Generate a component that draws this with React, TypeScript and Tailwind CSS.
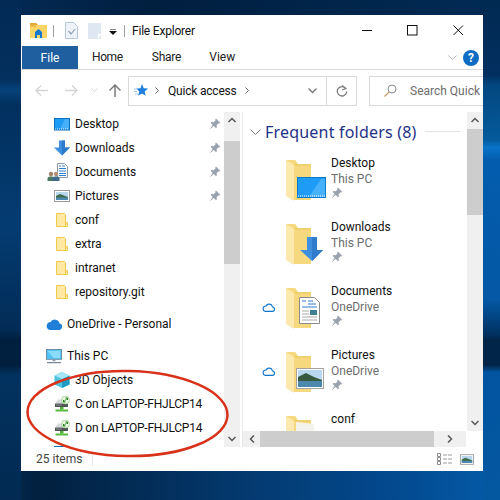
import React from 'react';

const font = "font-['Roboto','Noto_Sans',sans-serif]";

function SmallFolder() {
    return (
        <svg width="16" height="16" viewBox="0 0 16 16" className="shrink-0">
            <path d="M2.500 1.500h8l1 1v12h-9z" fill="#ffe9a3" stroke="#f2c94c" />
            <path d="M11.500 10.500h2v4h-2z" fill="#ffe9a3" stroke="#f2c94c" />
        </svg>
    );
}

function Pin({ className = '' }: { className?: string }) {
    return (
        <svg width="12" height="12" viewBox="0 0 12 12" className={`shrink-0 ${className}`}>
            <path d="M7 0.500l4.500 4.500-1.200.6-.7-.3-2 2 .3 2-1 1-2-2.200L1 11l-.2-.2 3-3.900-2.200-2 1-1 2 .3 2-2-.3-.7z" fill="#9aa3ad" />
        </svg>
    );
}

function DesktopIcon() {
    return (
        <svg width="16" height="13" viewBox="0 0 16 13" className="shrink-0">
            <rect x="0.500" y="0.500" width="15" height="11.500" fill="#1e9bf5" stroke="#0f6fb8" />
            <path d="M6 11l5-10h4v10z" fill="#46b1fa" />
            <path d="M1 11h14" stroke="#ffffff" strokeDasharray="1 1" strokeWidth="0.800" />
        </svg>
    );
}

function DownArrow() {
    return (
        <svg width="16" height="16" viewBox="0 0 16 16" className="shrink-0">
            <path d="M5 0.500h6v7h5l-8 8-8-8h5z" fill="#3f8fe0" />
            <path d="M8 .5h3v7h5l-8 8z" fill="#2f7bcb" />
        </svg>
    );
}

function DocsIcon() {
    return (
        <svg width="22" height="18" viewBox="0 0 22 18" className="shrink-0">
            <path d="M10.500 0.500h7l3 3v11h-10z" fill="#fff" stroke="#8b98a5" />
            <path d="M12 3h2M15 3h3M12 5.500h7M12 8h7M12 10.500h7M12 12.500h7" stroke="#2c7fd0" strokeWidth="1" />
            <circle cx="4" cy="11" r="2.200" fill="#a08468" />
            <path d="M0.500 18v-2.500c0-1.500 1.500-2 3.500-2s3.500.5 3.500 2V18z" fill="#4a7a62" />
            <circle cx="9" cy="11" r="2.200" fill="#b2937a" />
            <path d="M5.500 18v-2.500c0-1.500 1.500-2 3.500-2s3.500.5 3.500 2V18z" fill="#3d6a8a" />
        </svg>
    );
}

function PictureIcon({ w = 16, h = 12 }: { w?: number; h?: number }) {
    return (
        <svg width={w} height={h} viewBox="0 0 16 12" className="shrink-0">
            <rect x="0.500" y="0.500" width="15" height="11" fill="#fff" stroke="#9a9a9a" />
            <rect x="2" y="2" width="12" height="8" fill="#b9d8ee" />
            <path d="M2 6l4-2 4 1.500 4 1.500v1H2z" fill="#3f6b4a" />
            <rect x="2" y="7.500" width="12" height="2.500" fill="#4c8ab0" />
        </svg>
    );
}

function Cloud({ color = '#0f72d0', filled = false, w = 16, h = 11 }: { color?: string; filled?: boolean; w?: number; h?: number }) {
    return (
        <svg width={w} height={h} viewBox="0 0 16 11" className="shrink-0">
            <path
                d="M4 10.300h8.500a2.700 2.700 0 0 0 .4-5.400 4.200 4.200 0 0 0-7.900-1.300 3.400 3.400 0 0 0-1 6.700z"
                fill={filled ? color : 'none'}
                stroke={color}
                strokeWidth="1.400"
            />
        </svg>
    );
}

function PcIcon() {
    return (
        <svg width="16" height="15" viewBox="0 0 17 16" className="shrink-0">
            <rect x="0.500" y="0.500" width="16" height="10.500" fill="#53c3f5" stroke="#6a8aa0" />
            <path d="M2 2h13v7.500H8z" fill="#8bdcfb" />
            <path d="M7 11h3v2H7z" fill="#8e9aa5" />
            <path d="M1 14.500h15" stroke="#7d8b98" strokeWidth="1.400" />
        </svg>
    );
}

function CubeIcon() {
    return (
        <svg width="16" height="16" viewBox="0 0 16 16" className="shrink-0">
            <path d="M8 0l7.500 3.500v9L8 16 .5 12.500v-9z" fill="#4cc4e0" />
            <path d="M8 7l7.500-3.500v9L8 16z" fill="#1f9bc4" />
            <path d="M8 0l7.500 3.500L8 7 .5 3.500z" fill="#a5e6f4" />
        </svg>
    );
}

function NetDrive() {
    return (
        <svg width="16" height="16" viewBox="0 0 16 16" className="shrink-0">
            <path d="M1 7.500L4 3.500h6v4z" fill="#d8dadb" />
            <rect x="1" y="7.500" width="13" height="3.500" rx="0.500" fill="#4f5356" />
            <rect x="2" y="8.500" width="6" height="1" fill="#8b8f92" />
            <rect x="6" y="11" width="3.500" height="2.500" fill="#4fae35" />
            <rect x="1.500" y="13.500" width="12.500" height="2" fill="#58bb3c" />
            <circle cx="11.500" cy="4" r="4" fill="#eaf7e4" stroke="#86c66c" strokeWidth="0.600" />
            <path d="M9.500 6l4-4M11.500 2h2v2M11.500 6h-2V4" stroke="#237f1e" strokeWidth="1" fill="none" />
        </svg>
    );
}

function BigFolder({ children }: { children?: React.ReactNode }) {
    return (
        <svg width="42" height="42" viewBox="0 0 42 42" className="shrink-0">
            <path d="M0 0h9l3 4h13v36H6z" fill="#f6d97e" />
            <path d="M0 0l8 5v36L0 36z" fill="#fce9ad" />
            <path d="M8 5h17" stroke="#edc860" />
            {children}
        </svg>
    );
}

function SideRow({ icon, label, pin, indent = 'pl-[33px]', gap = 'gap-[5px]', tight }: { icon: React.ReactNode; label: string; pin?: boolean; indent?: string; gap?: string; tight?: boolean }) {
    return (
        <div className={`flex h-6 shrink-0 items-center ${indent} pr-[3px]`}>
            <div className={`flex min-w-0 flex-1 items-center ${gap}`}>
                {icon}
                <span className={`whitespace-nowrap text-[12px] text-[#111] ${tight ? 'tracking-[-0.25px]' : ''}`}>{label}</span>
            </div>
            {pin && <Pin />}
        </div>
    );
}

function Tile({ name, loc, cloud, pin = true, children }: { name: string; loc?: string; cloud?: boolean; pin?: boolean; children?: React.ReactNode }) {
    return (
        <div className="flex h-16 shrink-0 items-start">
            <div className="flex h-[58px] w-[43px] shrink-0 items-center pl-[19px]">{cloud && <Cloud w={13} h={9} />}</div>
            <div className="pt-[10px]"><BigFolder>{children}</BigFolder></div>
            <div className="flex flex-col pl-[3px] pt-[5px] text-[12px] leading-4">
                <span className="text-[#111]">{name}</span>
                {loc && <span className="text-[#6d6d6d]">{loc}</span>}
                {pin && <Pin />}
            </div>
        </div>
    );
}

function TitleBar() {
    return (
        <div className="flex h-[31px] shrink-0 items-center pl-[9px]">
            <svg width="17" height="15" viewBox="0 0 17 15" className="shrink-0">
                <path d="M0 0h6l2 2h9v13H0z" fill="#fbd568" />
                <path d="M0 0h6l2 2h-8z" fill="#e2a93a" />
                <path d="M0 2h5l2 2H0z" fill="#e9b949" />
                <path d="M5 15v-6l3.500-3 3.500 3v6h-2v-3H7v3z" fill="#1778d0" />
            </svg>
            <div className="ml-[6px] h-3 w-px bg-[#a0a0a0]" />
            <svg width="13" height="17" viewBox="0 0 13 17" className="ml-[11px] shrink-0">
                <path d="M.5.500h8l4 4v12H.5z" fill="#eef3f9" stroke="#b4c7dc" />
                <path d="M3.500 9l2.500 3 4-5" stroke="#8aa0b5" fill="none" strokeWidth="1.200" />
            </svg>
            <svg width="13" height="16" viewBox="0 0 13 16" className="ml-[10px] shrink-0">
                <path d="M0 0h13v16H0z" fill="#dfe7f2" />
                <path d="M10 11h3l-3 5z" fill="#fff" />
            </svg>
            <svg width="8" height="6" viewBox="0 0 8 6" className="ml-[8px] mt-[2px] shrink-0">
                <path d="M1 0h6" stroke="#111" />
                <path d="M0 2h8L4 6z" fill="#111" />
            </svg>
            <div className="ml-[7px] h-3 w-px bg-[#a0a0a0]" />
            <span className="ml-[7px] whitespace-nowrap text-[12px] tracking-[-0.2px] text-[#111]">File Explorer</span>
            <div className="ml-auto flex items-center">
                <svg width="11" height="11" viewBox="0 0 11 11" className="mr-[34px]"><path d="M0 5.500h10" stroke="#111" /></svg>
                <svg width="11" height="11" viewBox="0 0 11 11" className="mr-[35px]"><rect x="0.500" y="0.500" width="9.500" height="9.500" fill="none" stroke="#111" /></svg>
                <svg width="11" height="11" viewBox="0 0 11 11" className="mr-[19px]"><path d="M.5.500l9.500 9.500M10 .500L.5 10" stroke="#111" /></svg>
            </div>
        </div>
    );
}

function Ribbon() {
    return (
        <div className="flex h-6 shrink-0 border-b border-[#dadbdc] pl-px text-[12px]">
            <div className="flex h-[23px] w-14 items-center justify-center bg-[#1f5f9f] text-white">File</div>
            <span className="ml-[14px] leading-[23px] tracking-[-0.4px] text-[#222]">Home</span>
            <span className="ml-[29px] leading-[23px] tracking-[-0.2px] text-[#222]">Share</span>
            <span className="ml-[28px] leading-[23px] text-[#222]">View</span>
            <div className="ml-auto flex items-center gap-[6px] pr-[4px]">
                <svg width="9" height="6" viewBox="0 0 9 6"><path d="M.5.500l4 4 4-4" stroke="#b5b5b5" fill="none" /></svg>
                <div className="flex h-4 w-4 items-center justify-center rounded-full bg-[#0f6cc4] text-[12px] font-bold leading-none text-white">?</div>
            </div>
        </div>
    );
}

function AddressBar() {
    return (
        <div className="flex h-[42px] shrink-0 items-center pb-[6px] pt-[5px] text-[12px]">
            <svg width="13" height="11" viewBox="0 0 13 11" className="ml-[14px]"><path d="M6 .500L1 5.500l5 5M1 5.500h12" stroke="#d4d4d4" fill="none" strokeWidth="1.400" /></svg>
            <svg width="13" height="11" viewBox="0 0 13 11" className="ml-[17px]"><path d="M7 .500l5 5-5 5M12 5.500H0" stroke="#d4d4d4" fill="none" strokeWidth="1.400" /></svg>
            <svg width="7" height="5" viewBox="0 0 7 5" className="ml-[13px]"><path d="M.5.500l3 3 3-3" stroke="#d4d4d4" fill="none" /></svg>
            <svg width="12" height="13" viewBox="0 0 12 13" className="ml-[11px]"><path d="M.5 6.500L6 1l5.500 5.500M6 1v12" stroke="#7b7b7b" fill="none" strokeWidth="1.500" /></svg>
            <div className="ml-[7px] flex h-[30px] w-[229px] items-center border border-[#d9d9d9]">
                <svg width="14" height="13" viewBox="0 0 14 13" className="ml-[5px] shrink-0">
                    <path d="M8 0l1.700 4.200L14 4.600l-3.300 2.800 1 4.400L8 9.400l-3.800 2.400 1-4.400L2.500 4.600l4-.4z" fill="#1f7fdc" />
                    <path d="M0 5h3M0 7.500h3M1 10h3" stroke="#9cc6ee" />
                </svg>
                <svg width="4" height="7" viewBox="0 0 4 7" className="ml-[7px] shrink-0"><path d="M.5.500l3 3-3 3" stroke="#666" fill="none" /></svg>
                <span className="ml-[9px] whitespace-nowrap tracking-[-0.2px] text-[#111]">Quick access</span>
                <svg width="4" height="7" viewBox="0 0 4 7" className="ml-[8px] shrink-0"><path d="M.5.500l3 3-3 3" stroke="#666" fill="none" /></svg>
                <svg width="9" height="6" viewBox="0 0 9 6" className="ml-auto mr-[9px] shrink-0"><path d="M.5.500l4 4 4-4" stroke="#777" fill="none" strokeWidth="1.300" /></svg>
                <div className="flex h-full w-[30px] shrink-0 items-center justify-center border-l border-[#d9d9d9]">
                    <svg width="12" height="12" viewBox="0 0 12 12"><path d="M9.800 3.500A4.700 4.700 0 1 0 10.700 6.500M6 .500L9.800 3.500 6 5" stroke="#7b7b7b" fill="none" strokeWidth="1.300" /></svg>
                </div>
            </div>
            <div className="ml-[12px] flex h-[30px] flex-1 items-center overflow-hidden border-y border-l border-[#d9d9d9]">
                <svg width="13" height="13" viewBox="0 0 13 13" className="ml-[14px] shrink-0"><circle cx="8" cy="5" r="4" fill="none" stroke="#888" /><path d="M5 8l-4.500 4.500" stroke="#c79a6a" strokeWidth="1.200" /></svg>
                <span className="ml-[13px] whitespace-nowrap text-[#6d6d6d]">Search Quick</span>
            </div>
        </div>
    );
}

function Scrollbar({ top, thumb, rest }: { top: string; thumb: string; rest: string }) {
    return (
        <div className="flex w-4 shrink-0 flex-col bg-[#f0f0f0]">
            <div className={`flex ${top} shrink-0 items-start justify-center pt-[5px]`}>
                <svg width="8" height="6" viewBox="0 0 8 6"><path d="M.5 5l3.500-3.500L7.500 5" stroke="#555" fill="none" strokeWidth="1.500" /></svg>
            </div>
            <div className={`${thumb} shrink-0 bg-[#cdcdcd]`} />
            <div className={`flex ${rest} items-end justify-center pb-[5px]`}>
                <svg width="8" height="6" viewBox="0 0 8 6"><path d="M.5 1l3.500 3.500L7.500 1" stroke="#555" fill="none" strokeWidth="1.500" /></svg>
            </div>
        </div>
    );
}

function NavPane() {
    return (
        <div className="flex h-[335px] w-[219px] shrink-0">
            <div className="flex min-w-0 flex-1 flex-col overflow-hidden">
                <SideRow icon={<DesktopIcon />} label="Desktop" pin />
                <SideRow icon={<DownArrow />} label="Downloads" pin />
                <SideRow icon={<DocsIcon />} label="Documents" pin indent="pl-[26px]" gap="gap-[6px]" />
                <SideRow icon={<PictureIcon />} label="Pictures" pin />
                <SideRow icon={<SmallFolder />} label="conf" />
                <SideRow icon={<SmallFolder />} label="extra" />
                <SideRow icon={<SmallFolder />} label="intranet" />
                <SideRow icon={<SmallFolder />} label="repository.git" />
                <div className="mt-2">
                    <SideRow icon={<Cloud color="#1f7fd8" filled />} label="OneDrive - Personal" indent="pl-[25px]" />
                </div>
                <div className="mt-2">
                    <SideRow icon={<PcIcon />} label="This PC" indent="pl-[25px]" />
                </div>
                <SideRow icon={<CubeIcon />} label="3D Objects" />
                <SideRow icon={<NetDrive />} label="C on LAPTOP-FHJLCP14" tight />
                <SideRow icon={<NetDrive />} label="D on LAPTOP-FHJLCP14" tight />
                <SideRow icon={<DesktopIcon />} label="" />
            </div>
            <Scrollbar top="h-[29px]" thumb="h-[123px]" rest="flex-1" />
        </div>
    );
}

function MainPane() {
    return (
        <div className="ml-[2px] flex h-[335px] min-w-0 flex-1 flex-col border-l border-[#e9e9e9]">
            <div className="flex min-h-0 flex-1">
                <div className="flex min-w-0 flex-1 flex-col overflow-hidden">
                    <div className="flex h-[38px] shrink-0 items-center pb-[4px] pl-[7px] pr-[7px] pt-[5px]">
                        <svg width="11" height="6" viewBox="0 0 11 6" className="shrink-0"><path d="M.5.500l5 5 5-5" stroke="#777" fill="none" /></svg>
                        <span className="ml-[4px] whitespace-nowrap font-['Noto_Sans',sans-serif] text-[16px] tracking-[0.2px] text-[#1e3287]">Frequent folders (8)</span>
                        <div className="ml-[8px] h-px flex-1 bg-[#e2e2e2]" />
                    </div>
                    <Tile name="Desktop" loc="This PC">
                        <rect x="11.500" y="17.500" width="28" height="20" fill="#1e9bf5" stroke="#0f78c4" />
                        <path d="M23 37l12-18h4v18z" fill="#47b2fb" />
                        <path d="M12 36h27" stroke="#fff" strokeDasharray="1 1" />
                    </Tile>
                    <Tile name="Downloads" loc="This PC">
                        <path d="M21 13h10v13h6L26 37 14 26h7z" fill="#3f8fe0" />
                        <path d="M26 13h5v13h6L26 37z" fill="#2f7bcb" />
                    </Tile>
                    <Tile name="Documents" loc="OneDrive" cloud>
                        <path d="M13.500 9.500h15l5 5v21h-20z" fill="#fff" stroke="#8a8a8a" />
                        <path d="M16 13h4M22 13h5M22 16h8M16 19h15" stroke="#2a7ed0" />
                        <path d="M16 23h7M16 26h7M16 29h15M16 32h15" stroke="#aaa" />
                        <rect x="24" y="22" width="7" height="5" fill="#3f7f92" />
                    </Tile>
                    <Tile name="Pictures" loc="OneDrive" cloud>
                        <rect x="10.500" y="16.500" width="27" height="20" fill="#fff" stroke="#a2a2a2" />
                        <rect x="12" y="18" width="24" height="17" fill="#b7d8ee" />
                        <path d="M12 25l8-4 8 4 8 3v2H12z" fill="#37593f" />
                        <rect x="12" y="29" width="24" height="6" fill="#4b88ad" />
                    </Tile>
                    <Tile name="conf" pin={false}>
                        <path d="M10 6l18 2v30H10z" fill="#f4f2ec" />
                    </Tile>
                </div>
                <Scrollbar top="h-[17px]" thumb="h-[86px]" rest="flex-1" />
            </div>
            <div className="flex h-[16px] shrink-0 pr-[17px]">
                <div className="flex flex-1 bg-[#f0f0f0]">
                    <div className="flex w-[17px] items-center justify-center">
                        <svg width="6" height="8" viewBox="0 0 6 8"><path d="M5 .500L1.500 4 5 7.500" stroke="#555" fill="none" strokeWidth="1.500" /></svg>
                    </div>
                    <div className="w-[174px] bg-[#cdcdcd]" />
                    <div className="flex flex-1 items-center justify-center">
                        <svg width="6" height="8" viewBox="0 0 6 8"><path d="M1 .500L4.500 4 1 7.500" stroke="#555" fill="none" strokeWidth="1.500" /></svg>
                    </div>
                </div>
            </div>
        </div>
    );
}

export default function App() {
    return (
        <div className={`relative h-[500px] w-[500px] overflow-hidden pl-[21px] pt-[15px] ${font} [background:linear-gradient(180deg,#032a55_0%,#03305e_16%,#05427a_18%,#02305e_21%,#043c72_45%,#022c56_66%,#011f3e_68%,#011f3e_73%,#02325f_75%,#022a52_100%)_left/21px_100%_no-repeat,linear-gradient(180deg,#012a52_0%,#012f5f_15%,#03477f_17%,#045a9c_28%,#0a74c8_29.500%,#045cae_32%,#0458a4_60%,#00305f_67%,#012548_68%,#012548_73%,#0254a0_74.500%,#0458a0_100%)_right/17px_100%_no-repeat,linear-gradient(90deg,#032a55_0%,#011f3f_30%,#012a55_100%)_top/100%_15px_no-repeat,linear-gradient(90deg,#022a52_0%,#02203f_8%,#043a70_50%,#034a90_80%,#045ca8_100%)]`}>
            <div className="flex h-[456px] w-[462px] flex-col bg-white">
                <TitleBar />
                <Ribbon />
                <AddressBar />
                <div className="flex min-h-0 flex-1">
                    <NavPane />
                    <MainPane />
                </div>
                <div className="flex h-6 shrink-0 items-center pl-[15px] pr-[9px] text-[12px] text-[#444]">
                    <span>25 items</span>
                    <div className="ml-[10px] h-[14px] w-px bg-[#e6e6e6]" />
                    <svg width="16" height="13" viewBox="0 0 16 13" className="ml-auto shrink-0">
                        <path d="M.5.500h3v3h-3zM.5 4.500h3v3h-3zM.5 8.500h3v3h-3z" fill="none" stroke="#8a8a8a" />
                        <path d="M6 2h4M11 2h4M6 6h4M11 6h4M6 10h4M11 10h4" stroke="#9a9a9a" />
                    </svg>
                    <div className="ml-[7px]"><PictureIcon w={14} h={11} /></div>
                </div>
            </div>
            <svg width="210" height="96" viewBox="0 0 210 96" className="pointer-events-none absolute left-[23px] top-[368px]">
                <ellipse cx="104.500" cy="45.500" rx="100" ry="42.500" fill="none" stroke="#d8321a" strokeWidth="2.500" transform="rotate(1 104.500 45.500)" />
            </svg>
        </div>
    );
}
